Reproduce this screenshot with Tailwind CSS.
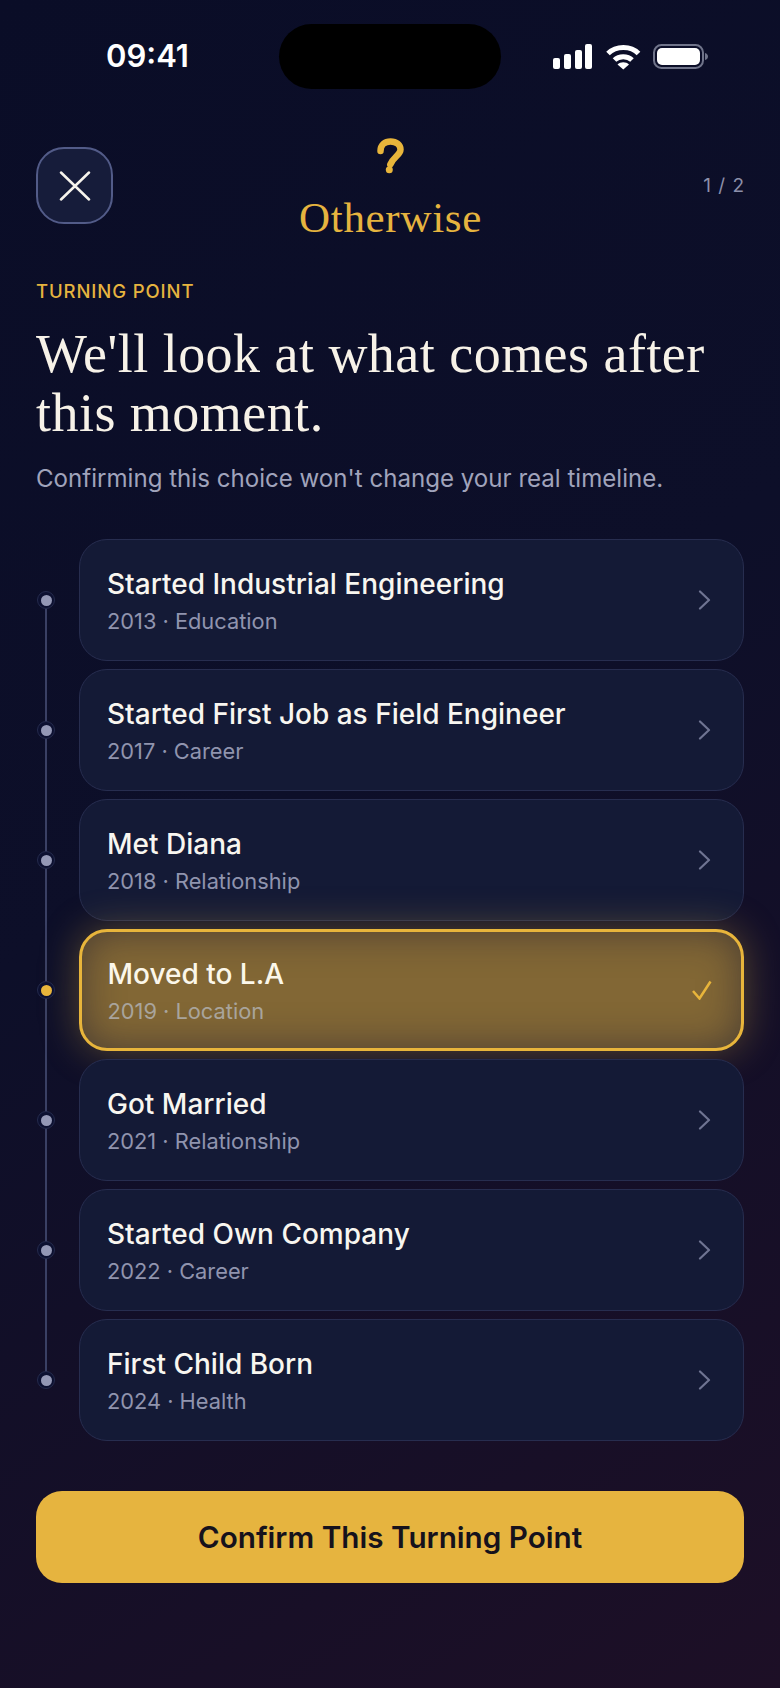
<!DOCTYPE html>
<html lang="en">
<head>
<meta charset="utf-8">
<script src="https://cdn.jsdelivr.net/npm/@tailwindcss/browser@4"></script>
</head>
<body class="m-0 bg-[#0a0d28]">
<div class="w-[780px] h-[1688px] overflow-hidden flex flex-col bg-[linear-gradient(148deg,#0a0d27_0%,#0d0f29_45%,#1d0f26_100%)] font-['Inter',sans-serif] text-white">

  <div class="h-[130px] flex-none px-[36px] pt-[24px] flex justify-between items-start">
    <div class="w-[243px] h-[65px] flex items-center pl-[70px] font-semibold text-[31px] text-white">09:41</div>
    <div class="w-[222px] h-[65px] rounded-full bg-black"></div>
    <div class="w-[243px] h-[65px] flex items-start justify-end pr-[4px] pt-[20px]">
      <svg width="187" height="26" viewBox="0 0 187 26" fill="none">
        <rect x="0" y="14" width="7" height="11" rx="2" fill="#fff"/>
        <rect x="11" y="10" width="7" height="15" rx="2" fill="#fff"/>
        <rect x="22" y="6" width="7" height="19" rx="2" fill="#fff"/>
        <rect x="32" y="0" width="7" height="25" rx="2" fill="#fff"/>
        <path d="M55 9.500C63 1.500 78 1.500 85.500 9.500" stroke="#fff" stroke-width="5"/>
        <path d="M61.500 16C66 11.500 74.500 11.500 79 16" stroke="#fff" stroke-width="5"/>
        <path d="M64.500 20.500C67.500 17.500 73 17.500 76 20.500L70.300 25.500Z" fill="#fff"/>
        <rect x="101" y="1" width="49" height="23" rx="7.500" stroke="#70748a" stroke-width="2"/>
        <rect x="104" y="4" width="43" height="17" rx="5" fill="#fff"/>
        <path d="M152 9C154 9.500 155 11 155 12.500C155 14 154 15.500 152 16Z" fill="#70748a"/>
      </svg>
    </div>
  </div>

  <div class="h-[111px] flex-none px-[36px] flex items-center justify-between">
    <button class="w-[77px] h-[77px] rounded-[28px] border-2 border-[#525b88] bg-[#161c3a] flex items-center justify-center">
      <svg width="32" height="30" viewBox="0 0 32 30" fill="none"><path d="M2 1.500L30 28.500M30 1.500L2 28.500" stroke="#f6f3ec" stroke-width="2.500" stroke-linecap="round"/></svg>
    </button>
    <div class="flex flex-col items-center">
      <svg width="27" height="36" viewBox="0 0 27 36" fill="none">
        <path d="M3.500 13C3.500 7 8 3.500 13.500 3.500C19.500 3.500 23.500 7 23.500 11.500C23.500 17 16.500 18.500 13.300 26.500" stroke="#e8b53b" stroke-width="6.500" stroke-linecap="round"/>
        <circle cx="12.300" cy="31.800" r="3.500" fill="#e8b53b"/>
      </svg>
      <div class="mt-[29px] font-['Liberation_Serif',serif] text-[43px] leading-[30px] tracking-[0.700px] text-[#e6b43f]">Otherwise</div>
    </div>
    <div class="text-[19px] text-[#8c90aa] tracking-[1px] w-[77px] text-right pt-[2px] -mr-[1px]">1 / 2</div>
  </div>

  <div class="px-[36px] flex-none">
    <div class="mt-[38px] text-[18.500px] leading-[24px] font-medium text-[#e6b43f] tracking-[0.900px]">TURNING POINT</div>
    <h1 class="mt-[22px] font-['Liberation_Serif',serif] font-normal text-[54px] leading-[59px] tracking-[0.470px] text-[#f7f2e8]">We'll look at what comes after<br>this moment.</h1>
    <p class="mt-[20px] text-[24.100px] leading-[32px] text-[#a0a3bb]">Confirming this choice won't change your real timeline.</p>
  </div>

  <div class="relative mt-[44px] ml-[36px] w-[708px] flex flex-col gap-[8px] flex-none">
    <div class="absolute left-[9.250px] top-[60px] h-[782px] w-[1.500px] bg-[#3a4064]"></div>

    <div class="flex items-center gap-[24px]">
      <span class="relative ml-[1px] w-[18px] h-[18px] flex-none rounded-full bg-[#0c1030] border border-[#242a4c] flex items-center justify-center"><span class="w-[11px] h-[11px] rounded-full bg-[#9498b5]"></span></span>
      <div class="flex-1 h-[122px] rounded-[28px] border-[1.500px] border-[#272d4f] bg-[#141a36] pl-[27px] pr-[32px] flex items-center justify-between">
        <div class="flex flex-col pt-[2px]"><span class="text-[28px] leading-[34px] font-medium text-[#f8f6f0]">Started Industrial Engineering</span><span class="mt-[6px] text-[21.800px] leading-[28px] text-[#9094ae]">2013 · Education</span></div>
        <svg width="13" height="20" viewBox="0 0 13 20" fill="none"><path d="M2 1.500L11 10L2 18.500" stroke="#6f7492" stroke-width="2.200" stroke-linecap="round" stroke-linejoin="round"/></svg>
      </div>
    </div>

    <div class="flex items-center gap-[24px]">
      <span class="relative ml-[1px] w-[18px] h-[18px] flex-none rounded-full bg-[#0c1030] border border-[#242a4c] flex items-center justify-center"><span class="w-[11px] h-[11px] rounded-full bg-[#9498b5]"></span></span>
      <div class="flex-1 h-[122px] rounded-[28px] border-[1.500px] border-[#272d4f] bg-[#141a36] pl-[27px] pr-[32px] flex items-center justify-between">
        <div class="flex flex-col pt-[2px]"><span class="text-[28px] leading-[34px] font-medium text-[#f8f6f0]">Started First Job as Field Engineer</span><span class="mt-[6px] text-[21.800px] leading-[28px] text-[#9094ae]">2017 · Career</span></div>
        <svg width="13" height="20" viewBox="0 0 13 20" fill="none"><path d="M2 1.500L11 10L2 18.500" stroke="#6f7492" stroke-width="2.200" stroke-linecap="round" stroke-linejoin="round"/></svg>
      </div>
    </div>

    <div class="flex items-center gap-[24px]">
      <span class="relative ml-[1px] w-[18px] h-[18px] flex-none rounded-full bg-[#0c1030] border border-[#242a4c] flex items-center justify-center"><span class="w-[11px] h-[11px] rounded-full bg-[#9498b5]"></span></span>
      <div class="flex-1 h-[122px] rounded-[28px] border-[1.500px] border-[#272d4f] bg-[#141a36] pl-[27px] pr-[32px] flex items-center justify-between">
        <div class="flex flex-col pt-[2px]"><span class="text-[28px] leading-[34px] font-medium text-[#f8f6f0]">Met Diana</span><span class="mt-[6px] text-[21.800px] leading-[28px] text-[#9094ae]">2018 · Relationship</span></div>
        <svg width="13" height="20" viewBox="0 0 13 20" fill="none"><path d="M2 1.500L11 10L2 18.500" stroke="#6f7492" stroke-width="2.200" stroke-linecap="round" stroke-linejoin="round"/></svg>
      </div>
    </div>

    <div class="relative z-10 flex items-center gap-[24px]">
      <span class="relative ml-[1px] w-[18px] h-[18px] flex-none rounded-full bg-[#0c1030] border border-[#242a4c] flex items-center justify-center"><span class="w-[11px] h-[11px] rounded-full bg-[#e8b53b]"></span></span>
      <div class="flex-1 h-[122px] rounded-[28px] border-[3px] border-[#e8b53b] bg-[#826735] shadow-[0_0_38px_rgba(232,181,59,0.34),inset_0_0_38px_rgba(30,28,50,0.55)] pl-[25.500px] pr-[32px] flex items-center justify-between">
        <div class="flex flex-col pt-[2px]"><span class="text-[28px] leading-[34px] font-medium text-[#fbf7ea]">Moved to L.A</span><span class="mt-[6px] text-[21.800px] leading-[28px] text-[#a9a49c]">2019 · Location</span></div>
        <svg width="21" height="20" viewBox="0 0 21 20" fill="none" class="-mr-[3px]"><path d="M2 11L8.500 18.500L19.500 1.500" stroke="#e8b53b" stroke-width="2.500"/></svg>
      </div>
    </div>

    <div class="relative z-20 flex items-center gap-[24px]">
      <span class="relative ml-[1px] w-[18px] h-[18px] flex-none rounded-full bg-[#0c1030] border border-[#242a4c] flex items-center justify-center"><span class="w-[11px] h-[11px] rounded-full bg-[#9498b5]"></span></span>
      <div class="flex-1 h-[122px] rounded-[28px] border-[1.500px] border-[#272d4f] bg-[#141a36] pl-[27px] pr-[32px] flex items-center justify-between">
        <div class="flex flex-col pt-[2px]"><span class="text-[28px] leading-[34px] font-medium text-[#f8f6f0]">Got Married</span><span class="mt-[6px] text-[21.800px] leading-[28px] text-[#9094ae]">2021 · Relationship</span></div>
        <svg width="13" height="20" viewBox="0 0 13 20" fill="none"><path d="M2 1.500L11 10L2 18.500" stroke="#6f7492" stroke-width="2.200" stroke-linecap="round" stroke-linejoin="round"/></svg>
      </div>
    </div>

    <div class="relative z-20 flex items-center gap-[24px]">
      <span class="relative ml-[1px] w-[18px] h-[18px] flex-none rounded-full bg-[#0c1030] border border-[#242a4c] flex items-center justify-center"><span class="w-[11px] h-[11px] rounded-full bg-[#9498b5]"></span></span>
      <div class="flex-1 h-[122px] rounded-[28px] border-[1.500px] border-[#272d4f] bg-[#141a36] pl-[27px] pr-[32px] flex items-center justify-between">
        <div class="flex flex-col pt-[2px]"><span class="text-[28px] leading-[34px] font-medium text-[#f8f6f0]">Started Own Company</span><span class="mt-[6px] text-[21.800px] leading-[28px] text-[#9094ae]">2022 · Career</span></div>
        <svg width="13" height="20" viewBox="0 0 13 20" fill="none"><path d="M2 1.500L11 10L2 18.500" stroke="#6f7492" stroke-width="2.200" stroke-linecap="round" stroke-linejoin="round"/></svg>
      </div>
    </div>

    <div class="relative z-20 flex items-center gap-[24px]">
      <span class="relative ml-[1px] w-[18px] h-[18px] flex-none rounded-full bg-[#0c1030] border border-[#242a4c] flex items-center justify-center"><span class="w-[11px] h-[11px] rounded-full bg-[#9498b5]"></span></span>
      <div class="flex-1 h-[122px] rounded-[28px] border-[1.500px] border-[#272d4f] bg-[#141a36] pl-[27px] pr-[32px] flex items-center justify-between">
        <div class="flex flex-col pt-[2px]"><span class="text-[28px] leading-[34px] font-medium text-[#f8f6f0]">First Child Born</span><span class="mt-[6px] text-[21.800px] leading-[28px] text-[#9094ae]">2024 · Health</span></div>
        <svg width="13" height="20" viewBox="0 0 13 20" fill="none"><path d="M2 1.500L11 10L2 18.500" stroke="#6f7492" stroke-width="2.200" stroke-linecap="round" stroke-linejoin="round"/></svg>
      </div>
    </div>
  </div>

  <button class="mt-[50px] mx-[36px] h-[92px] w-[708px] flex-none rounded-[26px] bg-[#e6b43f] text-[#16121c] text-[29.700px] font-semibold">Confirm This Turning Point</button>
</div>
</body>
</html>
